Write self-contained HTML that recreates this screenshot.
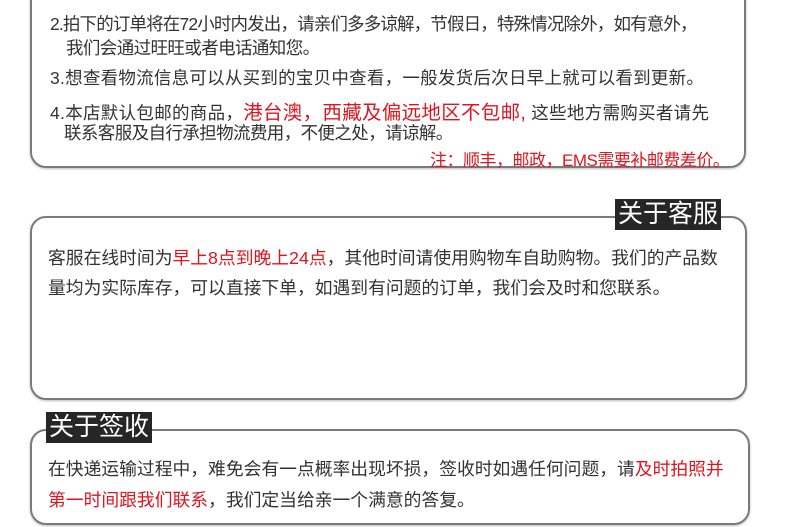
<!DOCTYPE html>
<html><head><meta charset="utf-8"><style>
body{margin:0;width:790px;height:527px;background:#fff;position:relative;overflow:hidden;font-family:"Liberation Sans","Noto Sans CJK SC",sans-serif;color:#333}
.box{position:absolute;border:2px solid #7a7a7a;border-radius:16px;box-shadow:0 1px 2px #bbb}
.t{position:absolute;white-space:nowrap;font-size:17.5px;letter-spacing:-0.6px}
.r{color:#e0141e}
.b{font-size:17.8px;letter-spacing:0}
.lab{position:absolute;background:#262626;color:#fff;font-size:25px;line-height:31px;padding:0 3px;letter-spacing:0}
</style></head><body>
<div class="box" style="left:30px;top:-30px;width:712px;height:194px"></div>
<div class="t" style="left:50px;top:11px;letter-spacing:-0.85px">2.拍下的订单将在72小时内发出，请亲们多多谅解，节假日，特殊情况除外，如有意外，</div>
<div class="t" style="left:66px;top:35px">我们会通过旺旺或者电话通知您。</div>
<div class="t" style="left:50px;top:65px;letter-spacing:0.25px">3.想查看物流信息可以从买到的宝贝中查看，一般发货后次日早上就可以看到更新。</div>
<div class="t" style="left:50px;top:96px;letter-spacing:0.3px">4.本店默认包邮的商品，<span class="r" style="font-size:19.5px">港台澳，西藏及偏远地区不包邮,</span> 这些地方需购买者请先</div>
<div class="t" style="left:64px;top:120px">联系客服及自行承担物流费用，不便之处，请谅解。</div>
<div class="t r" style="left:430px;top:146px;font-size:17px;letter-spacing:-0.5px">注：顺丰，邮政，EMS需要补邮费差价。</div>

<div class="box" style="left:30px;top:216px;width:713px;height:180px"></div>
<div class="lab" style="left:615px;top:199px">关于客服</div>
<div class="t b" style="left:48px;top:244px">客服在线时间为<span class="r">早上8点到晚上24点</span>，其他时间请使用购物车自助购物。我们的产品数</div>
<div class="t b" style="left:48px;top:274px">量均为实际库存，可以直接下单，如遇到有问题的订单，我们会及时和您联系。</div>

<div class="box" style="left:30px;top:429px;width:716px;height:92px"></div>
<div class="lab" style="left:46px;top:412px">关于签收</div>
<div class="t b" style="left:48px;top:455px">在快递运输过程中，难免会有一点概率出现坏损，签收时如遇任何问题，请<span class="r">及时拍照并</span></div>
<div class="t b" style="left:48px;top:486px"><span class="r">第一时间跟我们联系</span>，我们定当给亲一个满意的答复。</div>
</body></html>
